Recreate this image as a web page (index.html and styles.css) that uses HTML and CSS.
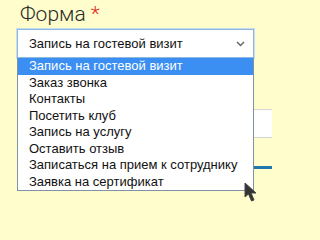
FILE: index.html
```html
<!DOCTYPE html>
<html lang="ru">
<head>
<meta charset="utf-8">
<link rel="stylesheet" href="styles.css">
</head>
<body>
<div class="page">
  <div class="field">
    <div class="label">Форма <span class="req">*</span></div>
    <div class="select">
      <span class="value">Запись на гостевой визит</span>
      <svg class="chev" width="9" height="6" viewBox="0 0 9 6"><path d="M1 1 L4.5 4.5 L8 1" fill="none" stroke="#666" stroke-width="1.5"/></svg>
    </div>
    <ul class="options">
      <li class="opt active">Запись на гостевой визит</li>
      <li class="opt">Заказ звонка</li>
      <li class="opt">Контакты</li>
      <li class="opt">Посетить клуб</li>
      <li class="opt">Запись на услугу</li>
      <li class="opt">Оставить отзыв</li>
      <li class="opt">Записаться на прием к сотруднику</li>
      <li class="opt">Заявка на сертификат</li>
    </ul>
  </div>
  <div class="input"></div>
  <div class="rule"></div>
</div>
<svg class="cursor" width="14" height="21" viewBox="0 0 14 21"><path d="M1 1 L1 15 L4.5 12 L7.5 19 L10 18 L7 11 L12 11 Z" fill="#333" stroke="#444" stroke-width="1" stroke-linejoin="round"/></svg>
</body>
</html>
```

FILE: styles.css
```css
html, body {
  margin: 0;
  padding: 0;
  background: #fffdcc;
  overflow: hidden;
}
body {
  width: 272px;
  height: 207px;
  position: relative;
  font-family: "Liberation Sans", Arial, sans-serif;
}
.page {
  padding-left: 17px;
}
.field {
  position: relative;
}
.label {
  font-family: Roboto, "Liberation Sans", sans-serif;
  font-weight: 300;
  font-size: 21px;
  color: #2a2a2a;
  line-height: 29px;
  padding-left: 3px;
  height: 29px;
}
.req {
  color: #e0302a;
}
.select {
  box-sizing: border-box;
  width: 237px;
  height: 29px;
  border: 1px solid #8fb8de;
  box-shadow: 0 0 0 1px #c7dcf0;
  background: #fff;
  display: flex;
  align-items: center;
  justify-content: space-between;
  padding: 0 8px 0 11px;
  font-size: 13px;
  color: #111;
}
.chev {
  display: block;
}
.options {
  position: absolute;
  left: 0;
  top: 58px;
  margin: 0;
  padding: 0;
  list-style: none;
  box-sizing: border-box;
  width: 237px;
  background: #fff;
  border: 1px solid #7f93a8;
  border-top: none;
  z-index: 2;
}
.opt {
  height: 16.5px;
  line-height: 16.5px;
  padding-left: 11px;
  font-size: 13px;
  color: #111;
  white-space: nowrap;
}
.opt.active {
  background: #3b8ef2;
  color: #fff;
}
.input {
  margin-top: 51px;
  height: 27px;
  margin-right: -20px;
  background: #fff;
  border-top: 1px solid #d4d4d4;
  border-bottom: 1px solid #d4d4d4;
}
.rule {
  margin-top: 28px;
  height: 3px;
  background: #1f78ad;
  margin-right: -20px;
}
.cursor {
  position: absolute;
  left: 244px;
  top: 182px;
  z-index: 5;
}
```
